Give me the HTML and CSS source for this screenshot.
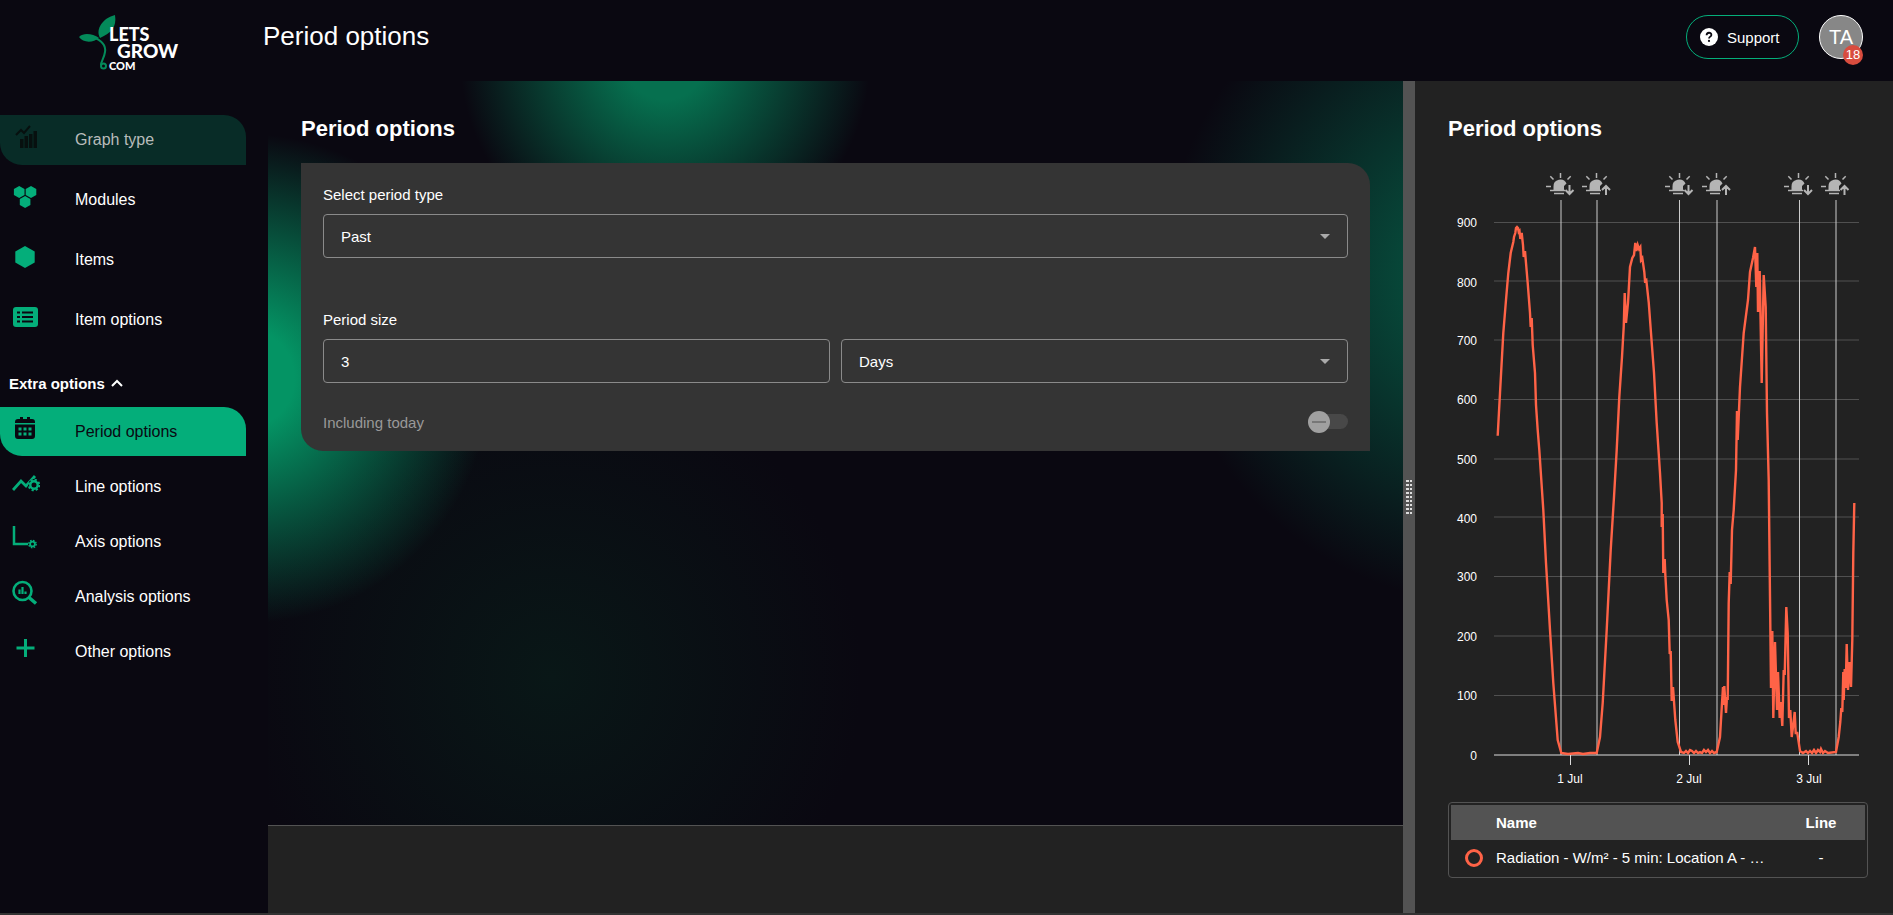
FILE: index.html
```
<!DOCTYPE html>
<html lang="en">
<head>
    <meta charset="UTF-8">
    <meta name="viewport" content="width=device-width, initial-scale=1.0">
    <title>Period options</title>
    <link rel="stylesheet" href="styles.css">
</head>
<body>
    <header class="topbar">
        <a class="logo" href="#" aria-label="LetsGrow.com">
            <svg width="104" height="56" viewBox="0 0 104 56">
                <path class="leaf" d="M36 0C38 12 32 18 21 23C16 14 24 3 36 0Z"/>
                <path class="leaf" d="M0 22C5 17 14 19 20 23C14 28 4 28 0 22Z"/>
                <path class="stem" d="M14 22C24 26 27 31 26 37C25 44 22 46 22 50"/>
                <path class="stem" d="M27 51a2.500 2.500 0 1 1-5 0a2.500 2.500 0 1 1 5 0"/>
                <text x="30" y="26" class="logo-lets">LETS</text>
                <text x="38" y="43" class="logo-grow">GROW</text>
                <text x="30" y="55" class="logo-com">COM</text>
            </svg>
        </a>
        <h1>Period options</h1>
        <button class="support" type="button">
            <svg width="18" height="18" viewBox="0 0 18 18">
                <circle cx="9" cy="9" r="9" fill="#fff"/>
                <path d="M6.600 7.200C6.600 4 11.400 4 11.400 6.900C11.400 8.600 9 8.700 9 10.500" fill="none" stroke="#0a0811" stroke-width="1.800"/>
                <circle cx="9" cy="12.900" r="1.100" fill="#0a0811"/>
            </svg>
            Support
        </button>
        <button class="avatar" type="button">TA<span class="badge">18</span></button>
    </header>

    <div class="layout">
        <nav class="sidebar">
            <ul class="menu">
                <li><a href="#" class="visited">
                    <svg width="26" height="26" viewBox="0 0 26 26">
                        <path d="M4 11L9 6L12 9L18 2" fill="none" stroke="currentColor" stroke-width="2"/>
                        <path d="M8 15h3.500v9H8zM12.500 12H16v12h-3.500zM17 10h3.500v14H17zM21.500 7H25v17h-3.500z" fill="currentColor"/>
                    </svg>
                    Graph type</a></li>
                <li><a href="#">
                    <svg width="26" height="26" viewBox="0 0 26 26">
                        <path d="M7.200 2L12.500 5v6L7.200 14L1.900 11V5zM19 2L24.300 5v6L19 14L13.700 11V5zM13.100 12L18.400 15v6L13.100 24L7.800 21v-6z" fill="currentColor"/>
                    </svg>
                    Modules</a></li>
                <li><a href="#">
                    <svg width="26" height="26" viewBox="0 0 26 26">
                        <path d="M13 2L22.700 7.500v11L13 24L3.300 18.500v-11z" fill="currentColor"/>
                    </svg>
                    Items</a></li>
                <li><a href="#">
                    <svg width="26" height="26" viewBox="0 0 26 26">
                        <rect x="1" y="3" width="25" height="20" rx="3" fill="currentColor"/>
                        <path d="M5 8.500h3M5 13h3M5 17.500h3M10 8.500h11M10 13h11M10 17.500h11" stroke="#0a0811" stroke-width="1.800"/>
                    </svg>
                    Item options</a></li>
            </ul>
            <button class="extra" type="button">Extra options
                <svg width="12" height="8" viewBox="0 0 12 8"><path d="M1 7L6 2L11 7" fill="none" stroke="currentColor" stroke-width="2"/></svg>
            </button>
            <ul class="menu menu-extra">
                <li><a href="#" class="active" aria-current="page">
                    <svg width="26" height="26" viewBox="0 0 26 26">
                        <path d="M6 4h2V2h3v2h4V2h3v2h2a3 3 0 0 1 3 3v1H3V7a3 3 0 0 1 3-3zM3 9.500h20V21a3 3 0 0 1-3 3H6a3 3 0 0 1-3-3z" fill="currentColor"/>
                        <path d="M6.500 14h3M11.500 14h3M16.500 14h3M6.500 19h3M11.500 19h3M16.500 19h3" stroke="#04ae7a" stroke-width="3"/>
                    </svg>
                    Period options</a></li>
                <li><a href="#">
                    <svg width="28" height="26" viewBox="0 0 28 26">
                        <path d="M1 20L9 11L14 16L23 6" fill="none" stroke="currentColor" stroke-width="2.800"/>
                        <circle cx="22" cy="15" r="6" fill="#0a0811"/>
                        <circle cx="22" cy="15" r="3.700" fill="none" stroke="currentColor" stroke-width="2.400"/>
                        <circle cx="22" cy="15" r="5.300" fill="none" stroke="currentColor" stroke-width="2" stroke-dasharray="2.200 1.960"/>
                    </svg>
                    Line options</a></li>
                <li><a href="#">
                    <svg width="26" height="26" viewBox="0 0 26 26">
                        <path d="M2 1V19H16" fill="none" stroke="currentColor" stroke-width="2.500"/>
                        <circle cx="20.500" cy="19" r="2.400" fill="none" stroke="currentColor" stroke-width="1.800"/>
                        <circle cx="20.500" cy="19" r="3.700" fill="none" stroke="currentColor" stroke-width="1.400" stroke-dasharray="1.600 1.306"/>
                    </svg>
                    Axis options</a></li>
                <li><a href="#">
                    <svg width="26" height="26" viewBox="0 0 26 26">
                        <circle cx="10.500" cy="11" r="9" fill="none" stroke="currentColor" stroke-width="2.600"/>
                        <path d="M17 17.500L24 23.500" stroke="currentColor" stroke-width="3.500"/>
                        <path d="M7.500 9.500v4.500M10.500 7v7M13.500 11.500v2.500" stroke="currentColor" stroke-width="2.200"/>
                    </svg>
                    Analysis options</a></li>
                <li><a href="#">
                    <svg width="26" height="26" viewBox="0 0 26 26">
                        <path d="M13.500 4v18M4.500 13h18" stroke="currentColor" stroke-width="3"/>
                    </svg>
                    Other options</a></li>
            </ul>
        </nav>

        <main class="content">
            <section class="options">
                <h2>Period options</h2>
                <form class="card">
                    <div class="field">
                        <label for="period-type">Select period type</label>
                        <div class="select">
                            <select id="period-type">
                                <option>Past</option>
                                <option>Fixed</option>
                            </select>
                        </div>
                    </div>
                    <div class="field">
                        <label for="period-size">Period size</label>
                        <div class="row">
                            <input type="text" id="period-size" value="3">
                            <div class="select">
                                <select aria-label="Period unit">
                                    <option>Days</option>
                                    <option>Weeks</option>
                                </select>
                            </div>
                        </div>
                    </div>
                    <div class="toggle-row">
                        <label for="today">Including today</label>
                        <input type="checkbox" id="today" class="toggle" disabled>
                    </div>
                </form>
            </section>
            <footer class="actions"></footer>
        </main>

        <div class="splitter"><span class="grip"></span></div>

        <aside class="preview">
            <h2>Period options</h2>
            <svg class="chart" viewBox="0 -2 420 627">
                <defs>
                    <symbol id="sun" viewBox="0 0 28 24">
                        <path d="M7.500 18.500V14.500a6.800 6.800 0 0 1 13-3L18 14V18.500z" fill="#b5b5b5"/>
                        <path d="M14.500 1v5M4.300 4.300l3.200 3.200M24.700 4.300l-3.200 3.200M0 14.500h5M4 18.500h15M8 21.500h10" fill="none" stroke="#b5b5b5" stroke-width="1.500"/>
                    </symbol>
                </defs>
                <!-- horizontal grid -->
                <path class="grid" d="M46 57.500H411M46 116H411M46 175H411M46 234.500H411M46 294H411M46 352H411M46 411.500H411M46 471H411M46 530.500H411"/>
                <!-- sunset / sunrise markers -->
                <path class="marker" d="M113 35V590M149 35V590M231.500 35V590M269 35V590M351.500 35V590M388 35V590"/>
                <use href="#sun" x="98" y="7" width="28" height="24"/>
                <use href="#sun" x="134" y="7" width="28" height="24"/>
                <use href="#sun" x="217" y="7" width="28" height="24"/>
                <use href="#sun" x="254" y="7" width="28" height="24"/>
                <use href="#sun" x="336" y="7" width="28" height="24"/>
                <use href="#sun" x="373" y="7" width="28" height="24"/>
                <path class="arrow" d="M121.500 20v9m-4-4l4 4l4-4M240.500 20v9m-4-4l4 4l4-4M360 20v9m-4-4l4 4l4-4"/>
                <path class="arrow" d="M158 30v-9m-4 4l4-4l4 4M278 30v-9m-4 4l4-4l4 4M396.500 30v-9m-4 4l4-4l4 4"/>
                <!-- axes -->
                <path class="axis" d="M46 590H411M122.500 590v10M241.500 590v10M360.500 590v10"/>
                <g class="ylabels">
                    <text x="29" y="62">900</text>
                    <text x="29" y="122">800</text>
                    <text x="29" y="180">700</text>
                    <text x="29" y="239">600</text>
                    <text x="29" y="299">500</text>
                    <text x="29" y="358">400</text>
                    <text x="29" y="416">300</text>
                    <text x="29" y="476">200</text>
                    <text x="29" y="535">100</text>
                    <text x="29" y="595">0</text>
                </g>
                <g class="xlabels">
                    <text x="122" y="618">1 Jul</text>
                    <text x="241" y="618">2 Jul</text>
                    <text x="361" y="618">3 Jul</text>
                </g>
                <polyline class="series" points="49.7,270.7 52,228 55.3,168 58,135 60.3,108 62.7,88 65.3,77 66,72 67.3,68 68,63 69,62 70,63 70.7,67 71.500,66 72.3,74 73.7,68 75,80 75.7,92 77,86 78,98 79.7,118 82,148 82.7,162 83.7,153 84.7,180 87,208 88,240 89.7,265 91.3,285 93.3,315 95.3,345 98,398 102,465 105.3,518 109.7,575 113.3,588 120,589 130,588 135,589 142,588 148.7,588 152,572 154.7,538 158.7,465 162.7,385 166,332 168.7,285 171.3,232 174,192 175.7,162 176.7,128 178,158 180,138 182,102 184.3,93 186,90 187.3,78 188.3,86 189.7,80 191,84 192.3,82 193,95 194.3,93 196.3,107 197,116 198.3,115 200.7,137 203,168 206,208 208.7,258 212,308 213.7,338 213.7,362 214.7,349 215.3,408 216.7,394 217.3,409 218.7,435 220.7,455 221.7,489 222.7,486 223.7,536 225,522 227.3,555 229.7,577 233,587 236,588 238,586 240,588 242,585 244,586 246,588 248,586 250,588 252,587 254,588 256,585 258,587 260,585 262,588 264,586 266,588 268.7,587 272,572 274,538 275,522 275.3,540 276.3,521 278,548 279,532 279.7,535 280.7,438 281.7,407 282.7,419 284,365 285.7,345 288,305 289,246 289.7,275 292,222 295.7,168 300,135 302,107 305,93 307,82 308.3,122 309.3,88 310,147 311.7,106 313.7,218 315.7,110 317.7,142 319,248 320.7,315 322,432 323,523 324.3,466 325.3,553 327,477 329,545 330,507 331.7,553 332.7,537 334.3,561 335.7,505 336.7,510 338.3,442 339.7,468 341,553 342.3,545 343.7,572 345,562 346.7,547 347.7,568 349.3,568 352,586 355,588 358,586 360,588 362,586 364,588 366,585 368,588 370,585 372,587 373,584 375,588 377,586 380,588 388,587 390.7,572 392.3,557 393.3,543 394.3,547 395.3,507 395.7,535 396.7,504 397.7,523 398.7,479 400,525 401.3,497 403,522 404.3,475 405.3,388 406.3,338"/>
            </svg>
            <div class="legend">
                <table>
                    <thead>
                        <tr><th class="col-dot"></th><th>Name</th><th class="col-line">Line</th></tr>
                    </thead>
                    <tbody>
                        <tr>
                            <td class="col-dot"><span class="dot"></span></td>
                            <td>Radiation - W/m² - 5 min: Location A - …</td>
                            <td class="col-line">-</td>
                        </tr>
                    </tbody>
                </table>
            </div>
        </aside>
    </div>
</body>
</html>
```
FILE: styles.css
```
* {
    box-sizing: border-box;
}
body {
    display: flex;
    flex-direction: column;
    min-height: 100vh;
    margin: 0;
    font-family: "Liberation Sans", Arial, sans-serif;
    font-size: 15px;
    color: #fff;
    background-color: #0a0811;
    border-bottom: 2px solid #333;
}
h1 {
    flex: 1;
    margin: 0;
    font-size: 26px;
    font-weight: normal;
    line-height: 42px;
}
h2 {
    margin: 0 0 20px;
    font-size: 22px;
    line-height: 28px;
}
button, input, select {
    font: inherit;
    color: inherit;
}
button {
    cursor: pointer;
}

/* Top bar */
.topbar {
    display: flex;
    align-items: flex-start;
    height: 81px;
    padding: 15px 30px 0 79px;
}
.logo {
    width: 184px;
}
.leaf {
    fill: #048a5a;
}
.stem {
    fill: none;
    stroke: #048a5a;
    stroke-width: 2;
}
.logo text {
    fill: #fff;
    font-family: Lato, sans-serif;
    font-weight: 900;
}
.logo-lets {
    font-size: 18px;
}
.logo-grow {
    font-size: 19px;
}
.logo-com {
    font-size: 11px;
}
.support {
    display: flex;
    align-items: center;
    gap: 9px;
    width: 113px;
    height: 44px;
    padding: 0 0 0 13px;
    background: none;
    border: 1px solid #04ae7a;
    border-radius: 22px;
}
.avatar {
    position: relative;
    width: 44px;
    height: 44px;
    margin-left: 20px;
    padding: 0;
    font-size: 20px;
    background-color: #878787;
    border: 1px solid #fff;
    border-radius: 50%;
}
.badge {
    position: absolute;
    right: -1px;
    bottom: -7px;
    width: 20px;
    height: 20px;
    font-size: 13px;
    line-height: 20px;
    background-color: #d84c3e;
    border-radius: 50%;
}

/* Columns */
.layout {
    flex: 1;
    display: grid;
    grid-template-columns: 268px 1fr 12px 478px;
}

/* Sidebar */
.sidebar {
    padding: 34px 22px 0 0;
}
.menu {
    display: flex;
    flex-direction: column;
    gap: 10px;
    margin: 0;
    padding: 0;
    list-style: none;
}
.menu-extra {
    gap: 6px;
}
.menu a {
    display: grid;
    grid-template-columns: 63px 1fr;
    align-items: center;
    height: 50px;
    padding-left: 12px;
    font-size: 16px;
    color: #fff;
    text-decoration: none;
    border-radius: 0 22px 0 22px;
}
.menu-extra a {
    height: 49px;
}
.menu svg {
    margin-bottom: 7px;
    color: #04ae7a;
}
.menu .visited {
    color: #b8bcbb;
    background-color: #082c27;
}
.menu .visited svg {
    color: #07100f;
}
.menu .active, .menu .active svg {
    color: #0a0811;
}
.menu .active {
    background-color: #04ae7a;
}
.extra {
    display: flex;
    align-items: center;
    gap: 6px;
    height: 18px;
    margin: 29px 0 15px;
    padding: 0 0 0 9px;
    font-weight: bold;
    background: none;
    border: none;
}

/* Options */
.content {
    display: flex;
    flex-direction: column;
}
.options {
    flex: 1;
    padding: 34px 33px;
    background:
        radial-gradient(circle 245px at -2% 40%, #049464 20%, transparent),
        radial-gradient(circle 205px at 35% -3%, #06704f 20%, transparent),
        radial-gradient(circle 330px at 108% 26%, #065e47, transparent),
        radial-gradient(circle 310px at 25% 80%, #091717, transparent);
}
.card {
    padding: 22px 22px 18px;
    background-color: #343434;
    border-radius: 0 22px 0 22px;
}
.field {
    margin-bottom: 52px;
}
.field label {
    display: block;
    margin-bottom: 9px;
    line-height: 20px;
}
.row {
    display: grid;
    grid-template-columns: 1fr 1fr;
    gap: 11px;
}
.field + .field {
    margin-bottom: 28px;
}
.select {
    position: relative;
}
.select select, .field input {
    display: block;
    width: 100%;
    height: 44px;
    padding: 0 17px;
    background-color: transparent;
    border: 1px solid #8a8a8a;
    border-radius: 4px;
    appearance: none;
}
.select option {
    background-color: #343434;
}
.select::after {
    content: "";
    position: absolute;
    top: 20px;
    right: 18px;
    border: 5px solid transparent;
    border-top-color: #aaa;
    border-bottom: none;
    pointer-events: none;
}
.toggle-row {
    display: flex;
    justify-content: space-between;
    align-items: center;
    height: 22px;
    color: #999;
}
.toggle {
    position: relative;
    width: 40px;
    height: 22px;
    margin: 0;
    appearance: none;
}
.toggle::before {
    content: "";
    position: absolute;
    inset: 3px 0 4px 4px;
    background-color: #484848;
    border-radius: 8px;
}
.toggle::after {
    content: "";
    position: absolute;
    left: 0;
    width: 22px;
    height: 22px;
    background: linear-gradient(#777, #777) center / 14px 2px no-repeat #a0a0a0;
    border-radius: 50%;
}
.actions {
    height: 88px;
    background-color: #222;
    border-top: 1px solid #535353;
}

/* Splitter */
.splitter {
    display: flex;
    align-items: center;
    justify-content: center;
    background-color: #535353;
}
.grip {
    width: 6px;
    height: 34px;
    background:
        linear-gradient(#535353, #535353) center / 1px 100% no-repeat,
        repeating-linear-gradient(#ddd 0 2px, transparent 2px 4px);
}

/* Preview */
.preview {
    padding: 34px 25px 0 33px;
    background-color: #222;
}
.chart {
    display: block;
    width: 100%;
    font-size: 12px;
}
.chart text {
    fill: #fff;
}
.grid {
    stroke: #505050;
}
.marker {
    stroke: #ccc;
}
.arrow {
    fill: none;
    stroke: #b5b5b5;
    stroke-width: 2;
}
.axis {
    fill: none;
    stroke: #ddd;
}
.ylabels {
    text-anchor: end;
}
.xlabels {
    text-anchor: middle;
}
.series {
    fill: none;
    stroke: #ff6347;
    stroke-width: 2.400;
}
.legend {
    margin-top: 12px;
    padding: 2px;
    border: 1px solid #535353;
    border-radius: 4px;
}
.legend table {
    width: 100%;
    border-collapse: collapse;
    table-layout: fixed;
}
.legend th, .legend td {
    height: 35px;
    padding: 0;
    text-align: left;
}
.legend th {
    background-color: #535353;
}
.legend .col-dot {
    width: 45px;
    padding-left: 14px;
}
.legend .col-line {
    width: 88px;
    text-align: center;
}
.dot {
    display: block;
    width: 18px;
    height: 18px;
    border: 3px solid #ff6347;
    border-radius: 50%;
}
```
